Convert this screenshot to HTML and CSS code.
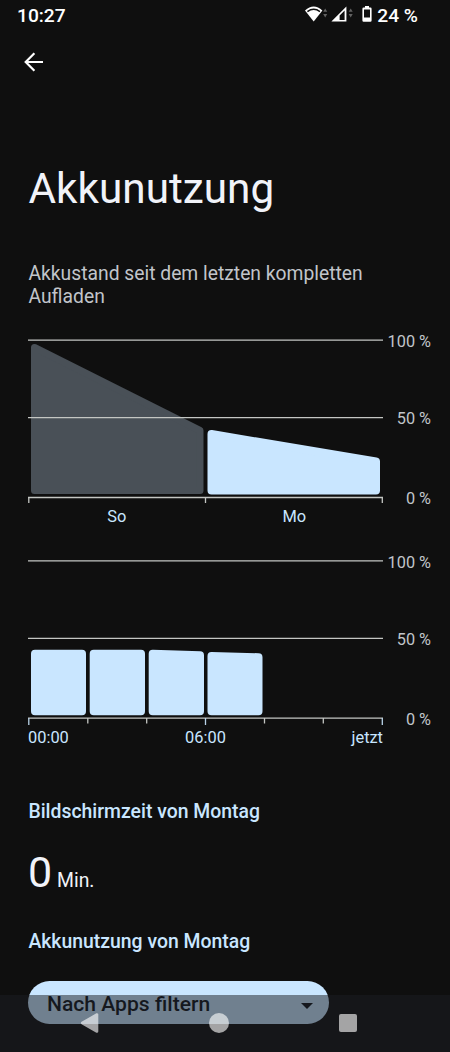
FILE: index.html
```
<!DOCTYPE html>
<html lang="de">
<head>
  <meta charset="UTF-8">
  <meta name="viewport" content="width=device-width, initial-scale=1.0">
  <title>Akkunutzung</title>
  <link rel="stylesheet" href="styles.css">
</head>
<body>
  <header class="statusbar">
    <span class="clock">10:27</span>
    <div class="status-icons">
      <svg width="52" height="20" viewBox="0 0 52 20">
        <path d="M0 4.6 Q8.7 -3.4 17.4 4.6 L8.7 15.6 Z" fill="#fff"/>
        <path d="M2.4 5.6 Q8.7 1 15 5.6" fill="none" stroke="#0f0f0f" stroke-width="1.5"/>
        <path d="M18.2 5.8 L20.2 2.4 L22.2 5.8 Z M18.2 8 L20.2 11.4 L22.2 8 Z" fill="#626262"/>
        <path fill-rule="evenodd" d="M26.4 15.5 L41.4 0.5 V15.5 Z M34.6 9.6 V13.9 H39.6 V4.6 Z" fill="#fff"/>
        <path d="M43.7 5.8 L45.7 2.4 L47.7 5.8 Z M43.7 8 L45.7 11.4 L47.7 8 Z" fill="#626262"/>
      </svg>
      <svg class="battery" width="10" height="20" viewBox="0 0 10 20">
        <path fill-rule="evenodd" d="M3 0 H7 V1.6 H8.4 Q9.6 1.6 9.6 2.8 V14.5 Q9.6 15.7 8.4 15.7 H1.6 Q0.4 15.7 0.4 14.5 V2.8 Q0.4 1.6 1.6 1.6 H3 Z M2 3.4 V11.4 H8 V3.4 Z" fill="#fff"/>
      </svg>
      <span class="percent">24 %</span>
    </div>
  </header>

  <div class="toolbar">
    <svg width="20" height="20" viewBox="0 0 20 20">
      <path d="M19 10 H2 M10.4 1.3 L1.7 10 L10.4 18.7" fill="none" stroke="#fff" stroke-width="2.2"/>
    </svg>
  </div>

  <main>
    <h1>Akkunutzung</h1>
    <p class="summary">Akkustand seit dem letzten kompletten<br>Aufladen</p>

    <section class="chart daily">
      <div class="plot">
        <svg width="355" height="166" viewBox="28 338 355 166">
          <path class="bar dim" d="M34.5 347.4 L200 430.5 V490.5 H34.5 Z"/>
          <path class="bar" d="M211.5 434 L376 461.5 V490.5 H211.5 Z"/>
          <path class="line" d="M28 340.2 H383 M28 417.6 H383 M28 497.5 H383"/>
          <path class="line" d="M28.8 497 V503 M205.5 497 V503 M382.3 497 V503"/>
        </svg>
        <div class="days"><span>So</span><span>Mo</span></div>
      </div>
      <div class="scale"><span>100 %</span><span>50 %</span><span>0 %</span></div>
    </section>

    <section class="chart hourly">
      <div class="plot">
        <svg width="355" height="166" viewBox="28 559 355 166">
          <path class="bar" d="M35 653.8 H82 V711.3 H35 Z"/>
          <path class="bar" d="M93.7 653.8 H141 V711.3 H93.7 Z"/>
          <path class="bar" d="M152.7 653.8 L200 655.3 V711.3 H152.7 Z"/>
          <path class="bar" d="M211.5 656 L258.5 657.2 V711.3 H211.5 Z"/>
          <path class="line" d="M28 560.8 H383 M28 638.3 H383 M28 718.2 H383"/>
          <path class="line" d="M87.8 718 V723.5 M146.7 718 V723.5 M264.5 718 V723.5 M323.3 718 V723.5"/>
          <path class="line accent" d="M28.8 718 V725 M205.5 718 V725 M382.3 718 V725"/>
        </svg>
        <div class="hours"><span>00:00</span><span>06:00</span><span>jetzt</span></div>
      </div>
      <div class="scale"><span>100 %</span><span>50 %</span><span>0 %</span></div>
    </section>

    <h2>Bildschirmzeit von Montag</h2>
    <p class="screentime"><span class="big">0</span> Min.</p>
    <h2>Akkunutzung von Montag</h2>

    <button class="filter">
      <span>Nach Apps filtern</span>
      <svg width="12" height="6" viewBox="0 0 12 6"><path d="M0 0 H12 L6 6 Z" fill="#0f1419"/></svg>
    </button>
  </main>

  <nav class="navbar">
    <svg width="20" height="22" viewBox="0 0 20 22"><path d="M2.2 11 L17 2.5 V19.5 Z" fill="#fff" stroke="#fff" stroke-width="2.6" stroke-linejoin="round"/></svg>
    <span class="home"></span>
    <span class="recent"></span>
  </nav>
</body>
</html>
```

FILE: styles.css
```
* {
  box-sizing: border-box;
}
body {
  margin: 0;
  height: 1052px;
  overflow: hidden;
  background: #0f0f0f;
  color: #f1f3f9;
  font-family: Roboto, sans-serif;
}
h1, h2, p {
  margin: 0;
}
svg {
  display: block;
  flex: none;
}
.statusbar {
  display: flex;
  justify-content: space-between;
  height: 32px;
  padding: 4px 32px 0 17px;
  color: #fff;
  font-size: 19.2px;
  font-weight: 500;
  line-height: 23px;
}
.status-icons {
  display: flex;
}
.battery {
  margin: 2px 5px 0 5px;
}
.status-icons svg:first-child {
  margin-top: 2px;
}
.toolbar {
  height: 60px;
  padding: 20px 24px;
}
main {
  padding: 72px 19px 0 28px;
}
h1 {
  padding-left: 0.5px;
  font-size: 42.3px;
  font-weight: 400;
  line-height: 49px;
}
.summary {
  margin-top: 49px;
  padding-left: 0.5px;
  color: #c1c5ca;
  font-size: 19.3px;
  line-height: 23px;
}
.chart {
  display: flex;
  justify-content: space-between;
}
.daily {
  margin-top: 30px;
}
.hourly {
  margin-top: 31px;
}
.plot {
  width: 355px;
  height: 190px;
}
.bar {
  fill: #c9e6ff;
  stroke: #c9e6ff;
  stroke-width: 8;
  stroke-linejoin: round;
}
.bar.dim {
  fill: #495057;
  stroke: #495057;
  stroke-width: 7;
}
.line {
  fill: none;
  stroke: #c4c6c3;
  stroke-width: 1.3;
}
.line.accent {
  stroke: #b9d3e8;
}
.days, .hours {
  display: flex;
  color: #c9e6ff;
  font-size: 16.4px;
  line-height: 20px;
}
.days {
  margin-top: 3px;
}
.days span {
  flex: 1;
  text-align: center;
}
.hours {
  margin-top: 3px;
}
.hours span {
  flex: 1;
  text-align: center;
}
.hours span:first-child {
  text-align: left;
}
.hours span:last-child {
  text-align: right;
}
.scale {
  display: flex;
  flex-direction: column;
  margin-top: -6px;
  color: #c1c5ca;
  font-size: 16.3px;
  line-height: 20px;
  text-align: right;
}
.scale span {
  height: 77px;
}
.scale span:nth-child(2) {
  height: 80px;
}
.scale span:last-child {
  height: 20px;
}
.hourly .scale {
  margin-top: -6px;
}
h2 {
  padding-left: 0.4px;
  color: #c9e6ff;
  font-size: 19.4px;
  font-weight: 500;
  line-height: 24px;
}
.hourly + h2 {
  margin-top: 51px;
}
.screentime {
  margin: 23px 0 24px;
  font-size: 19.4px;
  line-height: 50px;
}
.big {
  font-size: 43px;
}
.filter {
  display: flex;
  align-items: center;
  justify-content: space-between;
  width: 301px;
  height: 43px;
  margin-top: 27px;
  padding: 1px 16px 0 19px;
  border: 0;
  border-radius: 22px;
  background: #c9e6ff;
  color: #0f1419;
  font: 500 21.1px Roboto, sans-serif;
}
.filter svg {
  margin-top: 6px;
}
.navbar {
  position: absolute;
  left: 0;
  right: 0;
  bottom: 0;
  display: flex;
  align-items: center;
  justify-content: space-between;
  height: 57px;
  padding: 0 93px 1px 80px;
  background: rgba(27, 29, 36, 0.51);
}
.navbar svg, .navbar span {
  opacity: 0.61;
}
.home {
  width: 20px;
  height: 20px;
  margin-right: 2px;
  border-radius: 50%;
  background: #fff;
}
.recent {
  width: 18px;
  height: 18px;
  border-radius: 2px;
  background: #fff;
}
```
